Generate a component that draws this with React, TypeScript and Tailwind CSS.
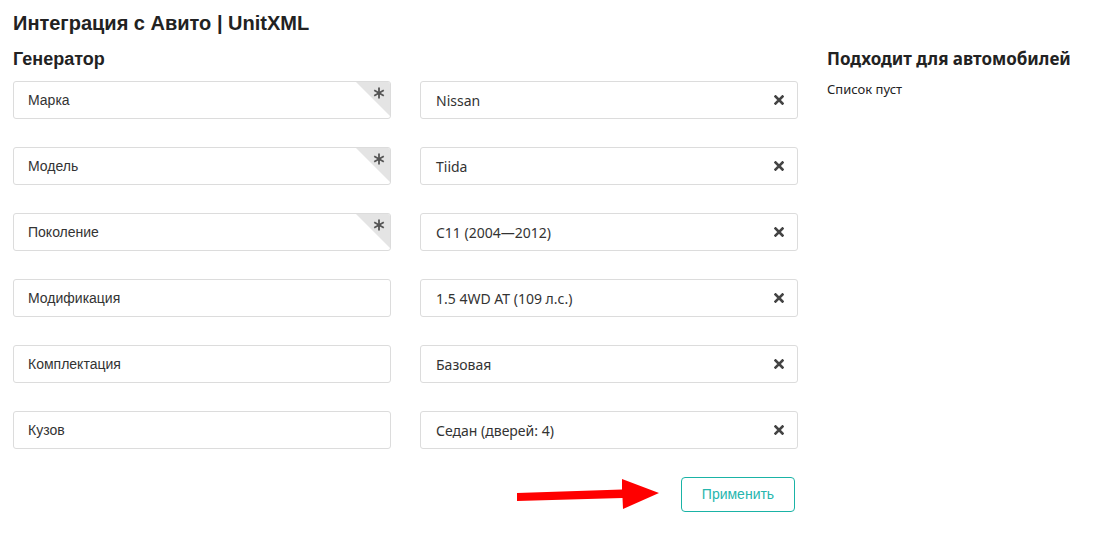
import React from "react";

const rows = [
  { label: "Марка", value: "Nissan", req: true },
  { label: "Модель", value: "Tiida", req: true },
  { label: "Поколение", value: "C11 (2004—2012)", req: true },
  { label: "Модификация", value: "1.5 4WD AT (109 л.с.)", req: false },
  { label: "Комплектация", value: "Базовая", req: false },
  { label: "Кузов", value: "Седан (дверей: 4)", req: false },
];

const arial = { fontFamily: '"Liberation Sans", Arial, sans-serif' };
const ubuntu = { fontFamily: '"Noto Sans", "Open Sans", sans-serif' };

export default function App() {
  return (
    <div className="w-[1117px] h-[550px] bg-white text-[#222] pl-[13px] pt-[10px]" style={arial}>
      <h1 className="text-[20px] font-bold leading-[26px] text-[#222]">Интеграция с Авито | UnitXML</h1>
      <div className="flex mt-[12px]">
        <div className="w-[785px]">
          <h2 className="text-[18px] font-bold leading-[22px] text-[#222]">Генератор</h2>
          <div className="mt-[11px] grid grid-cols-[378px_378px] gap-x-[29px] gap-y-[28px]">
            {rows.map((r) => (
              <React.Fragment key={r.label}>
                <div className="relative h-[38px] rounded-[3px] border border-[#dcdcdc] bg-white flex items-center pl-[14px] overflow-hidden">
                  <span className="text-[14px] text-[#333]">{r.label}</span>
                  {r.req && (
                    <div className="absolute top-0 right-0 w-[34px] h-[34px]">
                      <svg width="34" height="34" viewBox="0 0 34 34" className="absolute inset-0">
                        <polygon points="0,0 34,0 34,34" fill="#e4e4e4" />
                      </svg>
                      <svg width="12" height="12" viewBox="0 0 12 12" className="absolute right-[5px] top-[5px]">
                        <path d="M6 0.5 V11.5 M1.2 3.2 L10.8 8.8 M10.8 3.2 L1.2 8.8" stroke="#555" strokeWidth="1.8" />
                      </svg>
                    </div>
                  )}
                </div>
                <div className="h-[38px] rounded-[3px] border border-[#dcdcdc] bg-white flex items-center justify-between pl-[15px] pr-[13px]">
                  <span className="text-[14px] text-[#333]" style={ubuntu}>{r.value}</span>
                  <svg width="10" height="10" viewBox="0 0 10 10">
                    <path d="M1.5 1.5 L8.5 8.5 M8.5 1.5 L1.5 8.5" stroke="#444" strokeWidth="2.6" strokeLinecap="square" />
                  </svg>
                </div>
              </React.Fragment>
            ))}
          </div>
          <div className="flex items-center justify-end w-[782px] mt-[28px]">
            <svg width="143" height="32" viewBox="0 0 143 32" className="mr-[21px]">
              <polygon points="0,14 105,10.5 105,0 142,14 106,30 105.5,19 0,22" fill="#ff0000" />
            </svg>
            <button className="w-[114px] h-[35px] rounded-[4px] border border-[#1ab3a6] bg-white text-[14px] text-[#26b6ae]" style={arial}>
              Применить
            </button>
          </div>
        </div>
        <div className="pl-[29px]" style={ubuntu}>
          <h2 className="text-[17px] font-bold leading-[22px] text-[#222]">Подходит для автомобилей</h2>
          <p className="mt-[10px] text-[13px] text-[#222]">Список пуст</p>
        </div>
      </div>
    </div>
  );
}
